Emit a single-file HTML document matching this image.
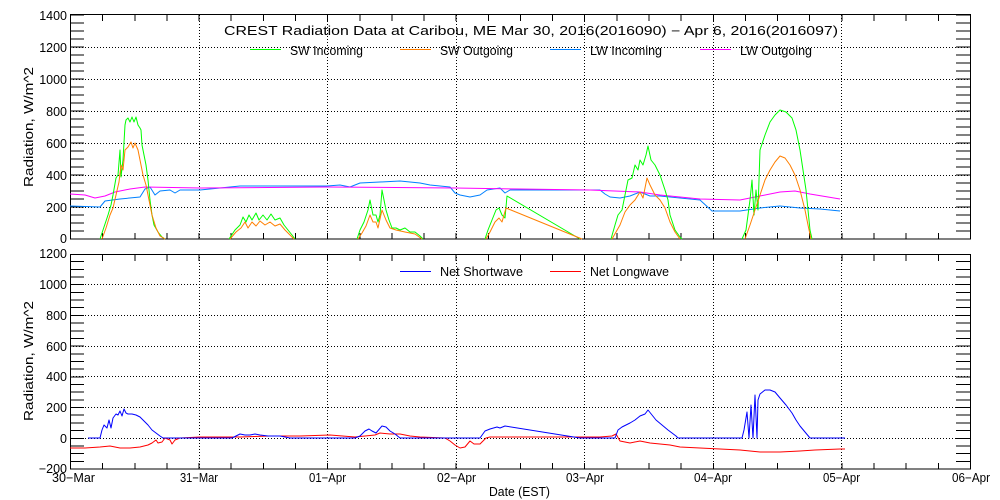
<!DOCTYPE html>
<html><head><meta charset="utf-8"><style>
html,body{margin:0;padding:0;background:#fff;}
svg{display:block;}
text{font-family:"Liberation Sans",sans-serif;font-size:12.5px;fill:#000;}
</style></head><body>
<svg width="1000" height="500" viewBox="0 0 1000 500" xmlns="http://www.w3.org/2000/svg">
<rect width="1000" height="500" fill="#fff"/>
<g shape-rendering="crispEdges" stroke="#000" fill="none">
<g stroke-dasharray="1 2" stroke-width="1">
<path d="M70 47.5H970M70 79.5H970M70 111.5H970M70 143.5H970M70 175.5H970M70 207.5H970"/>
<path d="M199.5 15V239M327.5 15V239M456.5 15V239M584.5 15V239M713.5 15V239M841.5 15V239"/>
<path d="M70 284.5H970M70 315.5H970M70 346.5H970M70 376.5H970M70 407.5H970M70 438.5H970"/>
<path d="M199.5 254V469M327.5 254V469M456.5 254V469M584.5 254V469M713.5 254V469M841.5 254V469"/>
</g>
<rect x="70.5" y="14.5" width="900" height="224.5"/>
<rect x="70.5" y="254.5" width="900" height="214.5"/>
<path d="M77 239.5V14" stroke-width="14" stroke-dasharray="1 7"/>
<path d="M963 239.5V14" stroke-width="14" stroke-dasharray="1 7"/>
<path d="M77 469.5V254" stroke-width="14" stroke-dasharray="1 6.68"/>
<path d="M963 469.5V254" stroke-width="14" stroke-dasharray="1 6.68"/>
<path d="M70 236H971" stroke-width="6" stroke-dasharray="1 31.14"/>
<path d="M70 18H971" stroke-width="6" stroke-dasharray="1 31.14"/>
<path d="M70 466H971" stroke-width="6" stroke-dasharray="1 31.14"/>
<path d="M70 258H971" stroke-width="6" stroke-dasharray="1 31.14"/>
</g>
<g text-anchor="end">
<text x="67" y="20">1400</text><text x="67" y="52">1200</text><text x="67" y="84">1000</text>
<text x="67" y="116">800</text><text x="67" y="148">600</text><text x="67" y="180">400</text>
<text x="67" y="212">200</text><text x="67" y="243">0</text>
<text x="67" y="258">1200</text><text x="67" y="289">1000</text><text x="67" y="320">800</text>
<text x="67" y="351">600</text><text x="67" y="381">400</text><text x="67" y="412">200</text>
<text x="67" y="443">0</text><text x="67" y="473">−200</text>
</g>
<text transform="translate(33,127) rotate(-90)" text-anchor="middle" textLength="120" lengthAdjust="spacingAndGlyphs">Radiation,  W/m^2</text>
<text transform="translate(33,361) rotate(-90)" text-anchor="middle" textLength="120" lengthAdjust="spacingAndGlyphs">Radiation,  W/m^2</text>
<g>
<text x="52" y="482" textLength="43" lengthAdjust="spacingAndGlyphs">30−Mar</text>
<text x="180" y="482" textLength="38" lengthAdjust="spacingAndGlyphs">31−Mar</text>
<text x="309" y="482" textLength="37" lengthAdjust="spacingAndGlyphs">01−Apr</text>
<text x="437" y="482" textLength="39" lengthAdjust="spacingAndGlyphs">02−Apr</text>
<text x="566" y="482" textLength="38" lengthAdjust="spacingAndGlyphs">03−Apr</text>
<text x="694" y="482" textLength="38" lengthAdjust="spacingAndGlyphs">04−Apr</text>
<text x="823" y="482" textLength="37" lengthAdjust="spacingAndGlyphs">05−Apr</text>
<text x="952" y="482" textLength="38" lengthAdjust="spacingAndGlyphs">06−Apr</text>
<text x="489" y="496" textLength="61" lengthAdjust="spacingAndGlyphs">Date (EST)</text>
<text x="224" y="35" textLength="614" lengthAdjust="spacingAndGlyphs">CREST Radiation Data at Caribou, ME   Mar 30, 2016(2016090) − Apr  6, 2016(2016097)</text>
</g>
<rect x="250" y="49" width="31" height="1" fill="#00ff00"/><rect x="400" y="49" width="31" height="1" fill="#ff7f00"/>
<rect x="550" y="49" width="31" height="1" fill="#0080ff"/><rect x="700" y="49" width="31" height="1" fill="#ff00ff"/>
<rect x="400" y="271" width="31" height="1" fill="#0000ff"/><rect x="550" y="271" width="31" height="1" fill="#ff0000"/>
<text x="290" y="55" textLength="73" lengthAdjust="spacingAndGlyphs">SW Incoming</text>
<text x="440" y="55" textLength="73" lengthAdjust="spacingAndGlyphs">SW Outgoing</text>
<text x="590" y="55" textLength="72" lengthAdjust="spacingAndGlyphs">LW Incoming</text>
<text x="740" y="55" textLength="72" lengthAdjust="spacingAndGlyphs">LW Outgoing</text>
<text x="440" y="276" textLength="83" lengthAdjust="spacingAndGlyphs">Net Shortwave</text>
<text x="590" y="276" textLength="79" lengthAdjust="spacingAndGlyphs">Net Longwave</text>
<g fill="none" stroke-width="1" stroke-linejoin="round">
<polyline stroke="#0080ff" points="70,206 100,207 105,201 120,199 140,197 145,189 150,187 155,195 160,191 170,190 175,193 180,190 200,190 240,186 327,186 340,185 350,187 360,183 380,182 400,181 420,183 430,185 450,187 455,193 460,195 470,197 480,195 487,190 500,188 505,193 510,190 535,190 600,190 605,194 610,197 620,198 630,196 640,192 650,196 660,196 680,198 700,200 712,211 740,211 760,208 780,206 800,208 820,209 840,211"/>
<polyline stroke="#ff00ff" points="70,194 85,195 95,198 105,196 115,192 130,189 145,187 200,188 327,187 455,188 520,189 590,190 640,192 660,195 700,199 740,200 760,196 780,192 795,191 810,194 840,199"/>
<g stroke="#00ff00">
<polyline points="100,239 103,230 108,215 111,205 113,195 116,178 118,175 120,150 121,177 123,160 125,125 126,120 128,118 130,122 132,117 134,122 136,117 138,125 140,128 141,130 142,145 144,155 146,165 148,180 150,200 152,215 154,225 158,232 162,237 165,239"/>
<polyline points="229,239 235,230 240,225 243,217 246,222 249,215 252,220 256,213 259,220 263,215 267,220 271,214 275,220 280,218 284,225 288,230 292,235 295,239"/>
<polyline points="357,239 360,230 364,222 368,210 370,200 373,215 376,215 378,222 380,215 382,190 384,200 386,210 389,220 392,228 396,228 400,230 405,228 410,232 415,232 420,236 423,239"/>
<polyline points="485,239 488,230 492,220 496,210 499,208 502,215 505,218 507,196 580,239"/>
<polyline points="611,239 615,225 618,215 622,210 625,195 628,180 632,178 635,165 638,170 640,160 643,165 646,155 648,146 651,160 655,165 660,175 665,190 668,200 670,215 675,230 680,237 682,239"/>
<polyline points="742,239 746,230 750,200 752,180 754,215 756,190 758,210 760,150 765,135 770,122 775,115 780,110 786,112 792,118 796,130 800,150 803,170 806,190 808,210 810,230 812,239"/>
</g>
<g stroke="#ff7f00">
<polyline points="102,239 106,228 110,215 113,208 116,195 119,182 121,165 123,170 125,150 128,147 131,142 133,148 135,143 138,150 140,160 143,175 146,185 149,200 152,215 156,228 160,236 165,239"/>
<polyline points="230,239 236,232 241,228 245,222 248,228 252,222 256,226 260,221 265,225 270,222 275,226 280,224 285,230 290,235 294,239"/>
<polyline points="358,239 362,233 366,226 370,215 373,222 376,222 378,228 382,210 386,220 390,228 396,230 405,232 415,234 422,239"/>
<polyline points="486,239 490,232 495,222 499,218 502,222 506,208 582,239"/>
<polyline points="612,239 616,232 620,225 625,212 630,205 635,200 640,192 643,198 647,178 650,185 655,195 660,200 665,208 670,222 675,232 680,239"/>
<polyline points="745,239 750,225 755,210 760,195 765,180 770,170 775,162 780,156 785,158 790,165 795,175 800,190 805,210 808,225 811,239"/>
</g>
</g>
<g fill="none" stroke-width="1" stroke-linejoin="round">
<polyline stroke="#ff0000" points="70,448 85,448 100,447 110,446 120,448 130,448 140,447 148,445 152,443 156,440 158,443 162,442 165,438 170,440 172,444 175,440 180,438 200,437 240,437 270,436 300,436 330,435 355,437 365,436 375,435 380,433 390,434 400,434 410,436 420,437 445,438 450,441 455,445 460,448 465,447 470,441 474,444 480,444 486,438 490,437 550,437 580,437 600,437 612,436 616,434 620,441 630,443 640,441 650,443 660,444 670,445 680,447 700,448 720,449 740,450 760,452 780,452 800,451 815,450 840,449 845,449"/>
<polyline stroke="#0000ff" points="88,438 100,438 102,430 104,425 107,428 109,420 111,428 113,418 116,414 118,415 120,411 122,416 124,409 126,413 128,414 132,414 136,415 140,417 144,421 148,425 152,430 156,433 160,436 163,438 232,438 236,436 240,434 245,435 250,435 255,434 260,435 268,436 280,436 290,438 355,438 360,436 365,431 369,429 372,431 376,433 382,426 386,427 390,431 395,434 400,438 480,438 485,431 490,429 497,427 500,428 505,426 580,438 615,438 618,430 622,427 626,425 630,423 635,420 640,416 645,414 648,410 652,415 656,420 662,425 668,430 672,433 676,436 678,438 742,438 744,430 747,412 749,438 751,405 753,438 755,395 757,438 758,400 760,394 765,390 770,390 775,392 780,398 786,405 792,413 796,420 800,426 805,432 810,438 845,438"/>
</g>
</svg>
</body></html>
